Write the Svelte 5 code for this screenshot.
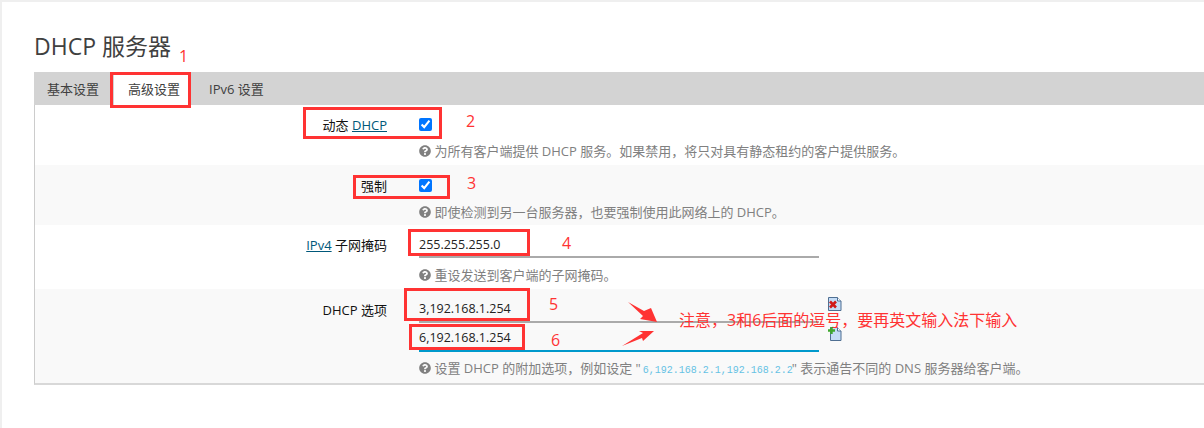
<script>
	const marks = [
		{ cls: 'tab-mark' },
		{ cls: 'dyn-mark' },
		{ cls: 'force-mark' },
		{ cls: 'mask-mark' },
		{ cls: 'opt1-mark' },
		{ cls: 'opt2-mark' }
	];
	const nums = [
		{ n: 1, x: 177, y: 44 },
		{ n: 2, x: 464, y: 109 },
		{ n: 3, x: 465, y: 171 },
		{ n: 4, x: 560, y: 231 },
		{ n: 5, x: 547, y: 292 },
		{ n: 6, x: 549, y: 328 }
	];
	const help =
		'M504 256c0 136.997-111.043 248-248 248S8 392.997 8 256C8 119.083 119.043 8 256 8s248 111.083 248 248zM262.655 90c-54.497 0-89.255 22.957-116.549 63.758-3.536 5.286-2.353 12.415 2.715 16.258l34.699 26.31c5.205 3.947 12.621 3.008 16.665-2.122 17.864-22.658 30.113-35.797 57.303-35.797 20.429 0 45.698 13.148 45.698 32.958 0 14.976-12.363 22.667-32.534 33.976C247.128 238.528 216 254.941 216 296v4c0 6.627 5.373 12 12 12h56c6.627 0 12-5.373 12-12v-1.333c0-28.462 83.186-29.647 83.186-106.667 0-58.002-60.165-102-116.531-102zM256 338c-25.365 0-46 20.635-46 46 0 25.364 20.635 46 46 46s46-20.636 46-46c0-25.365-20.635-46-46-46z';
</script>

{#snippet hint()}
	<svg class="hint-icon" viewBox="0 0 512 512"><path d={help} fill="#808080" /></svg>
{/snippet}

<div class="page">
	<h2 class="title">DHCP 服务器</h2>

	<div class="tabs">
		<span class="tab">基本设置</span>
		<span class="tab active">高级设置</span>
		<span class="tab">IPv6 设置</span>
	</div>

	<div class="panel">
		<div class="row first">
			<div class="label">动态 <u class="link">DHCP</u></div>
			<div class="field">
				<input class="check" type="checkbox" checked />
				<p class="desc">{@render hint()} 为所有客户端提供 DHCP 服务。如果禁用，将只对具有静态租约的客户提供服务。</p>
			</div>
		</div>
		<div class="row shade second">
			<div class="label">强制</div>
			<div class="field">
				<input class="check" type="checkbox" checked />
				<p class="desc">{@render hint()} 即使检测到另一台服务器，也要强制使用此网络上的 DHCP。</p>
			</div>
		</div>
		<div class="row third">
			<div class="label"><u class="link">IPv4</u> 子网掩码</div>
			<div class="field">
				<input class="text" value="255.255.255.0" />
				<p class="desc">{@render hint()} 重设发送到客户端的子网掩码。</p>
			</div>
		</div>
		<div class="row shade fourth">
			<div class="label">DHCP 选项</div>
			<div class="field">
				<div class="opt">
					<input class="text" value="3,192.168.1.254" />
					<svg class="file-icon del" viewBox="0 0 14 14">
						<path d="M.5.5h9l3.5 3.5v9.5h-12.500z" fill="#c4dcf6" stroke="#4f6f92" />
						<path d="M9.500.5v3.500h3.500" fill="#fff" stroke="#4f6f92" />
						<path d="M2 4.500l6 6M8 4.500l-6 6" stroke="#d01818" stroke-width="2.600" />
					</svg>
				</div>
				<div class="opt">
					<input class="text focus" value="6,192.168.1.254" />
					<svg class="file-icon" viewBox="0 0 14 14">
						<path d="M2.500.5h7l3.500 3.500v9.500h-10.500z" fill="#c4dcf6" stroke="#4f6f92" />
						<path d="M9.500.5v3.500h3.500" fill="#fff" stroke="#4f6f92" />
						<path d="M0 3.500h7M3.500 0v7" stroke="#3fa82f" stroke-width="2.400" />
					</svg>
				</div>
				<p class="desc">
					{@render hint()} 设置 DHCP 的附加选项，例如设定 "<code class="code">6,192.168.2.1,192.168.2.2</code>" 表示通告不同的 DNS 服务器给客户端。
				</p>
			</div>
		</div>
	</div>

	{#each marks as m}
		<div class="mark {m.cls}"></div>
	{/each}
	{#each nums as item}
		<span class="num" style="left:{item.x}px;top:{item.y}px">{item.n}</span>
	{/each}
	<span class="note">注意，3和6后面的逗号，要再英文输入法下输入</span>
	<svg class="arrows" viewBox="0 0 1204 428">
		<path d="M628 302L644 311L651 308L657 322L640 319L643 316z" fill="#f33" />
		<path d="M622 346L643 333L639 331L654 331L643 341L642 338z" fill="#f33" />
	</svg>
</div>

<style>
	:global(body) {
		margin: 0;
		background: #fff;
	}

	.page {
		position: relative;
		box-sizing: border-box;
		height: 428px;
		overflow: hidden;
		padding: 0 0 0 32px;
		border-top: 2px solid #efefef;
		border-left: 2px solid #efefef;
		font-family: 'Open Sans', 'Noto Sans CJK SC', sans-serif;
		font-size: 13px;
		color: #222;
	}

	.title {
		margin: 0;
		height: 70px;
		box-sizing: border-box;
		padding-top: 29px;
		font-size: 23px;
		line-height: 30px;
		font-weight: 400;
		color: #404040;
	}

	.tabs {
		display: flex;
		height: 33px;
		background: #d3d3d3;
		padding-left: 1px;
	}

	.tab {
		display: flex;
		align-items: center;
		padding: 0 13px 0 12px;
		color: #404040;
	}

	.tab.active {
		background: #fff;
		padding: 0 11px 0 14px;
		margin-left: 2px;
		margin-right: 6px;
	}

	.panel {
		border-left: 1px solid #ccc;
		border-bottom: 2px solid #d8d8d8;
	}

	.row {
		display: grid;
		grid-template-columns: 352px 1fr;
		column-gap: 32px;
		box-sizing: border-box;
	}

	.shade {
		background: #f9f9f9;
	}

	.first {
		height: 60px;
		padding-top: 13px;
	}

	.second {
		height: 60px;
		padding-top: 14px;
	}

	.third {
		height: 64px;
		padding-top: 8px;
	}

	.fourth {
		height: 94px;
		padding-top: 9px;
	}

	.label {
		text-align: right;
		color: #111;
		line-height: 15px;
	}

	.third .label {
		padding-top: 5px;
	}

	.fourth .label {
		padding-top: 5px;
	}

	.link {
		color: #00587a;
	}

	.field {
		min-width: 0;
	}

	.check {
		display: block;
		width: 13px;
		height: 13px;
		margin: 0;
		accent-color: #0075ff;
	}

	.text {
		display: block;
		box-sizing: border-box;
		width: 400px;
		height: 25px;
		padding: 0;
		border: 0;
		border-bottom: 2px solid #aaa;
		background: transparent;
		font: inherit;
		font-size: 12.5px;
		color: #222;
		outline: none;
	}

	.opt .text {
		padding-bottom: 3px;
	}

	.focus {
		border-bottom-color: #0099cc;
	}

	.opt {
		position: relative;
		width: 400px;
		height: 29px;
		display: flex;
	}

	.file-icon {
		position: absolute;
		left: 409px;
		top: 0;
		width: 14px;
		height: 14px;
	}

	.file-icon.del {
		top: -1px;
	}

	.desc {
		margin: 0;
		color: #808080;
		font-size: 13px;
		line-height: 16px;
		white-space: nowrap;
	}

	.first .desc,
	.second .desc {
		margin-top: 12px;
	}

	.third .desc {
		margin-top: 9px;
	}

	.fourth .desc {
		margin-top: 4px;
	}

	.hint-icon {
		width: 12px;
		height: 12px;
		vertical-align: -1px;
	}

	.code {
		margin: 0 -1px 0 2px;
		font-family: 'Liberation Mono', monospace;
		font-size: 10px;
		color: #66c2e4;
	}

	.mark {
		position: absolute;
		box-sizing: border-box;
		border: 3px solid #f33;
	}

	.tab-mark {
		left: 108px;
		top: 70px;
		width: 81px;
		height: 36px;
	}

	.dyn-mark {
		left: 301px;
		top: 105px;
		width: 139px;
		height: 32px;
	}

	.force-mark {
		left: 351px;
		top: 173px;
		width: 97px;
		height: 24px;
	}

	.mask-mark {
		left: 406px;
		top: 227px;
		width: 122px;
		height: 27px;
	}

	.opt1-mark {
		left: 402px;
		top: 286px;
		width: 126px;
		height: 33px;
	}

	.opt2-mark {
		left: 407px;
		top: 322px;
		width: 116px;
		height: 26px;
	}

	.num {
		position: absolute;
		color: #f33;
		font-size: 16px;
		line-height: 20px;
	}

	.note {
		position: absolute;
		left: 677px;
		top: 307px;
		color: #f33;
		font-size: 16px;
		line-height: 22px;
		white-space: nowrap;
	}

	.arrows {
		position: absolute;
		left: -2px;
		top: -2px;
		width: 1204px;
		height: 428px;
		pointer-events: none;
	}
</style>
